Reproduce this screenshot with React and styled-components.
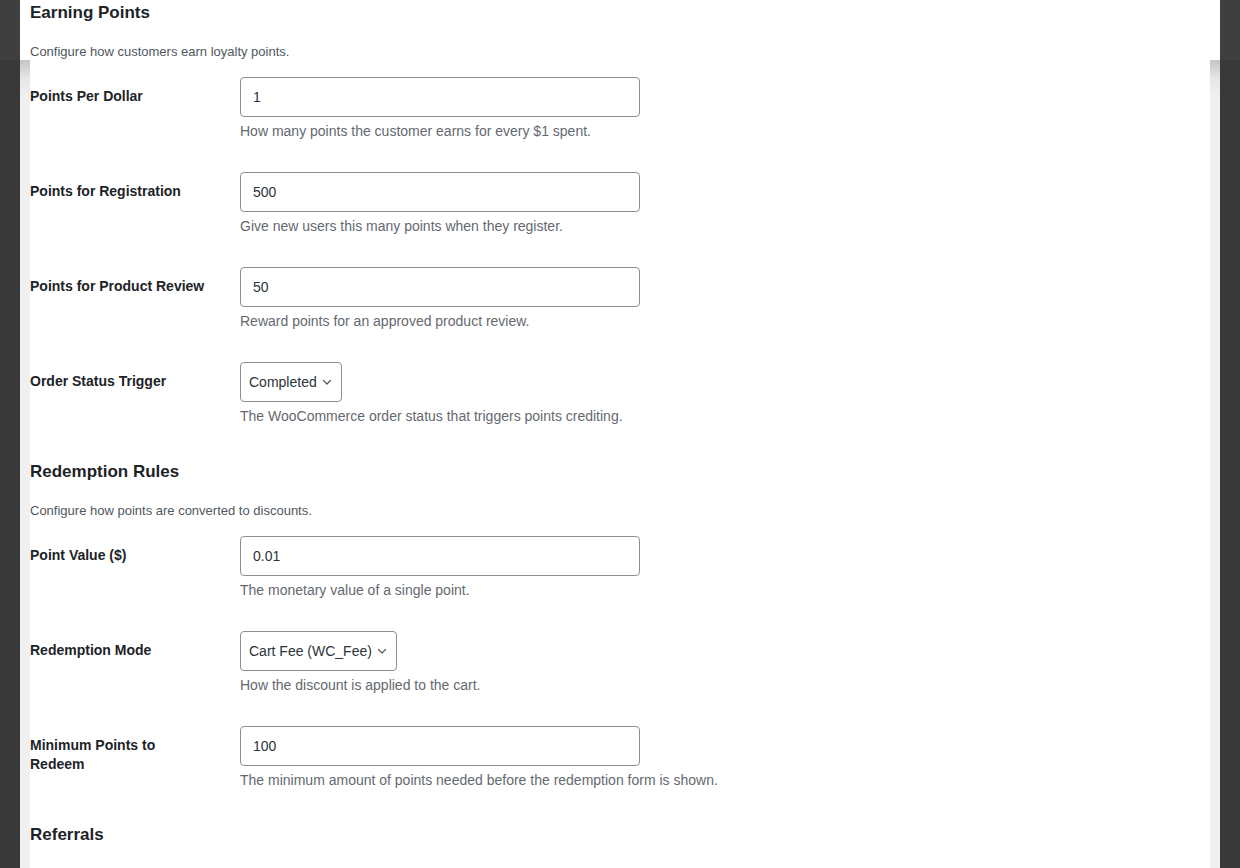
import React from "react";
import styled, { createGlobalStyle } from "styled-components";

const Global = createGlobalStyle`
  html, body { margin: 0; padding: 0; }
  body {
    background: linear-gradient(to bottom, #3f3f3f 0, #3f3f3f 60px, #393939 60px, #393939 100%);
    font-family: "Liberation Sans", Arial, sans-serif;
    color: #1d2327;
    overflow: hidden;
  }
`;

const Frame = styled.div`
  margin: 0 20px;
  min-height: 868px;
  padding: 0 10px;
  background: linear-gradient(
    to bottom,
    #ffffff 0,
    #ffffff 60px,
    #c3c4c7 60px,
    #e6e6e8 78px,
    #f0f0f1 96px,
    #f0f0f1 100%
  );
`;

const Card = styled.div`
  background: #ffffff;
  min-height: 868px;
  padding-top: 2px;
`;

const SectionTitle = styled.h2`
  font-size: 17px;
  font-weight: 700;
  line-height: 22px;
  margin: ${(p) => (p.$first ? "0" : "18.5px")} 0 0;
  color: #1d2327;
`;

const SectionDesc = styled.p`
  font-size: 13px;
  line-height: 20px;
  margin: 18px 0 0;
  color: #50575e;
`;

const Table = styled.div`
  display: flex;
  flex-direction: column;
`;

const Row = styled.div`
  display: grid;
  grid-template-columns: 200px 1fr;
  align-items: start;
`;

const Label = styled.label`
  display: block;
  padding: 25px 24px 15px 0;
  font-size: 14px;
  font-weight: 700;
  line-height: 19px;
  color: #1d2327;
`;

const Field = styled.div`
  padding: 15px 10px;
`;

const TextInput = styled.input`
  box-sizing: border-box;
  display: block;
  width: 400px;
  height: 40px;
  padding: 0 12px;
  border: 1px solid #8c8f94;
  border-radius: 4px;
  background: #fff;
  font-family: "Liberation Sans", Arial, sans-serif;
  font-size: 14px;
  color: #2c3338;
  outline: none;
`;

const SelectWrap = styled.div`
  position: relative;
  display: inline-block;
  vertical-align: top;
`;

const Select = styled.select`
  box-sizing: border-box;
  display: block;
  height: 40px;
  padding: 0 24px 0 8px;
  border: 1px solid #8c8f94;
  border-radius: 4px;
  background: #fff;
  font-family: "Liberation Sans", Arial, sans-serif;
  font-size: 14px;
  color: #2c3338;
  appearance: none;
  -webkit-appearance: none;
  outline: none;
`;

const Chevron = styled.svg`
  position: absolute;
  right: 7px;
  top: 12px;
  width: 16px;
  height: 16px;
  pointer-events: none;
`;

const Desc = styled.p`
  margin: 4px 0 0;
  font-size: 14px;
  line-height: 21px;
  color: #646970;
`;

const earning = [
  { label: "Points Per Dollar", type: "text", value: "1", desc: "How many points the customer earns for every $1 spent." },
  { label: "Points for Registration", type: "text", value: "500", desc: "Give new users this many points when they register." },
  { label: "Points for Product Review", type: "text", value: "50", desc: "Reward points for an approved product review." },
  { label: "Order Status Trigger", type: "select", value: "Completed", desc: "The WooCommerce order status that triggers points crediting." },
];

const redemption = [
  { label: "Point Value ($)", type: "text", value: "0.01", desc: "The monetary value of a single point." },
  { label: "Redemption Mode", type: "select", value: "Cart Fee (WC_Fee)", desc: "How the discount is applied to the cart." },
  { label: "Minimum Points to Redeem", type: "text", value: "100", desc: "The minimum amount of points needed before the redemption form is shown." },
];

function FieldRow({ item }) {
  return (
    <Row>
      <Label>{item.label}</Label>
      <Field>
        {item.type === "select" ? (
          <SelectWrap>
            <Select defaultValue={item.value}>
              <option>{item.value}</option>
            </Select>
            <Chevron viewBox="0 0 16 16" fill="none">
              <path d="M4.5 6.5 L8 10 L11.5 6.5" stroke="#50575e" strokeWidth="1.2" strokeLinecap="round" strokeLinejoin="round" />
            </Chevron>
          </SelectWrap>
        ) : (
          <TextInput type="text" defaultValue={item.value} />
        )}
        <Desc>{item.desc}</Desc>
      </Field>
    </Row>
  );
}

export default function App() {
  return (
    <>
      <Global />
      <Frame>
        <Card>
          <SectionTitle $first>Earning Points</SectionTitle>
          <SectionDesc>Configure how customers earn loyalty points.</SectionDesc>
          <Table>
            {earning.map((it) => (
              <FieldRow key={it.label} item={it} />
            ))}
          </Table>
          <SectionTitle>Redemption Rules</SectionTitle>
          <SectionDesc>Configure how points are converted to discounts.</SectionDesc>
          <Table>
            {redemption.map((it) => (
              <FieldRow key={it.label} item={it} />
            ))}
          </Table>
          <SectionTitle>Referrals</SectionTitle>
        </Card>
      </Frame>
    </>
  );
}
